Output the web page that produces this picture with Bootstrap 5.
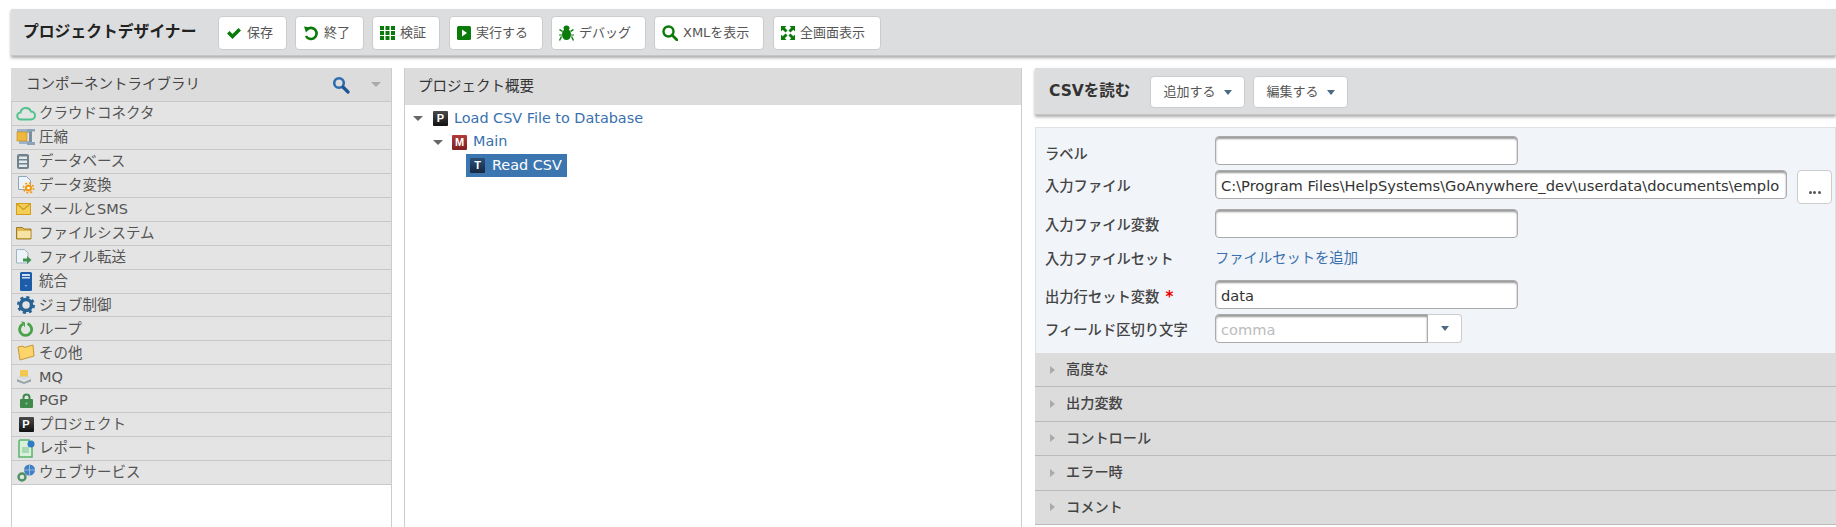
<!DOCTYPE html>
<html lang="ja">
<head>
<meta charset="utf-8">
<title>プロジェクトデザイナー</title>
<link href="https://cdn.jsdelivr.net/npm/bootstrap@5.3.0/dist/css/bootstrap.min.css" rel="stylesheet">
<style>
html,body{height:527px;overflow:hidden;background:#fff}
body{font-family:"DejaVu Sans","Noto Sans CJK JP",sans-serif;font-size:13px;color:#444}
.app-wrap{padding:9px 0 0 11px;height:527px;display:flex;flex-direction:column}
.topbar{height:47px;background:#dcddde;box-shadow:0 2px 3px #aaa;padding:7px 0 0 12px;flex:none;border-bottom:1px solid #c6c6c6}
.topbar-title{font-size:15.8px;font-weight:700;color:#222;width:195px;padding-top:4px;white-space:nowrap;line-height:24px}
.tool-btn{height:34px;background:#fff;border:1px solid #ccc;border-radius:4px;display:inline-flex;align-items:center;color:#555;font-size:13px;padding:0 0 0 7px;gap:5px;white-space:nowrap;flex:none}
.tool-btn svg{flex:none}
.btn-a{width:69px;margin-right:8px}
.btn-b{width:68px;margin-right:9px}
.btn-r{width:94px;margin-right:8px}
.btn-c{width:95px;margin-right:8px}
.btn-d{width:110px;margin-right:9px}
.btn-e{width:108px}
.panels{display:flex;margin-top:12px;flex:1;min-height:0}
.lib-pane{width:381px;border-left:1px solid #ccc;border-right:1px solid #ccc;flex:none}
.lib-head{height:34px;background:#dcdcdc;border-bottom:1px solid #c8c8c8;padding-left:15px;font-size:14.5px;color:#444;margin-left:-1px}
.lib-row{height:23.94px;background:#e4e4e4;border-bottom:1px solid #c8c8c8;display:flex;align-items:center;font-size:14.5px;color:#555;line-height:1}
.lib-ico{width:25px;padding-left:3px;display:flex;justify-content:center;flex:none;margin-right:2px}
.tree-pane{width:618px;margin-left:12px;border-left:1px solid #ccc;border-right:1px solid #ccc;flex:none}
.tree-head{height:37px;background:#dcdcdc;padding-left:13px;font-size:14.5px;color:#333;display:flex;align-items:center}
.tree-body{padding-top:2px;color:#3a71ae}
.tree-row{height:23.5px;display:flex;align-items:center;white-space:nowrap;font-size:14.4px}
.caret-dn{width:0;height:0;border-left:5px solid transparent;border-right:5px solid transparent;border-top:5px solid #666;flex:none}
.tree-sq{width:15px;height:15px;display:inline-flex;align-items:center;justify-content:center;font-size:11px;font-weight:700;color:#fff;border-radius:1px;line-height:1;flex:none;font-family:"Liberation Sans",sans-serif}
.sq-p{background:linear-gradient(#4a4a4a,#111)}
.sq-m{background:linear-gradient(#b23a3a,#7f1f1f)}
.sq-t{background:linear-gradient(#2d4f78,#14283f)}
.tree-l1{padding-left:8px}
.tree-l1 .tree-sq{margin-left:10px;margin-right:6px}
.tree-l2{padding-left:28px}
.tree-l2 .tree-sq{margin-left:9px;margin-right:6px}
.tree-l3{padding-left:61px}
.tree-sel{background:#3c76b1;color:#fff;height:23px;display:inline-flex;align-items:center;padding:0 0 0 4px;width:101px}
.tree-sel .tree-sq{margin-right:7px}
.prop-pane{flex:1;margin-left:13px;min-width:0}
.prop-head{height:47px;background:#dcddde;border-bottom:1px solid #c6c6c6;box-shadow:0 2px 3px #aaa;padding:8px 0 0 14px}
.prop-title{font-size:15.5px;font-weight:700;color:#333;width:101px;padding-top:4px;flex:none;white-space:nowrap}
.menu-btn{height:32px;background:#fff;border:1px solid #ccc;border-radius:4px;display:inline-flex;align-items:center;justify-content:center;gap:8px;color:#555;font-size:13px;flex:none;width:95px;margin-right:8px}
.caret-blue{width:0;height:0;border-left:4.5px solid transparent;border-right:4.5px solid transparent;border-top:5px solid #4a6b85;display:inline-block}
.prop-form{margin-top:12px;background:#f1f4f9;border:1px solid #dde0e5;border-bottom:0;height:226px;padding-top:8px;padding-left:9px}
.form-line{display:flex;align-items:center}
.form-lbl{width:170px;flex:none;font-size:14.3px;font-weight:500;color:#444;white-space:nowrap;padding-top:8px}
.req{color:#e00;font-weight:700;margin-left:6px;font-size:15px}
.fld{height:29px;background:#fff;border:1px solid #aaa;border-radius:4px;box-shadow:inset 0 2px 2px #999;padding:4px 5px 0;font-size:14.65px;color:#333;white-space:nowrap;overflow:hidden;line-height:22px}
.fld-s{width:303px}
.fld-l{width:572px}
.fld-c{width:213px;color:#bbb;border-radius:4px 0 0 4px}
.dots-btn{width:35px;height:34px;background:#fff;border:1px solid #ccc;border-radius:4px;margin-left:10px;display:flex;align-items:flex-end;justify-content:center;padding-bottom:9px;gap:1.5px;flex:none}
.dots-btn i{width:3px;height:3px;border-radius:50%;background:#555;display:block}
.combo-btn{width:34px;height:29px;background:#fff;border:1px solid #ccc;border-left:0;border-radius:0 4px 4px 0;display:flex;align-items:center;justify-content:center}
.acc-row{height:34.4px;background:#dcdcdc;border-bottom:1px solid #bbb;display:flex;align-items:center;padding-left:15px;font-size:14.2px;font-weight:500;color:#444}
.caret-r{width:0;height:0;border-top:4.5px solid transparent;border-bottom:4.5px solid transparent;border-left:5px solid #aaa;margin-right:11px}
.set-link{color:#3a71ae;font-size:14.3px}
</style>
</head>
<body>
<div class="app-wrap">
  <div class="topbar d-flex align-items-start">
    <div class="topbar-title">プロジェクトデザイナー</div>
    <span class="tool-btn btn-a"><svg width="16" height="14" viewBox="0 0 16 14"><path d="M1 7.500l2.500-2.500 3 3L12.500 2 15 4.500 6.500 13z" fill="#0a7a0a"/></svg>保存</span>
    <span class="tool-btn btn-a"><svg width="16" height="16" viewBox="0 0 16 16"><path d="M4 4.500A5.600 5.600 0 1 1 3 11" fill="none" stroke="#0a7a0a" stroke-width="2.600"/><path d="M1 1.500l6.500 1-4.500 5z" fill="#0a7a0a"/></svg>終了</span>
    <span class="tool-btn btn-b"><svg width="15" height="14" viewBox="0 0 15 14" fill="#0a7a0a"><rect width="4" height="4"/><rect x="5.500" width="4" height="4"/><rect x="11" width="4" height="4"/><rect y="5" width="4" height="4"/><rect x="5.500" y="5" width="4" height="4"/><rect x="11" y="5" width="4" height="4"/><rect y="10" width="4" height="4"/><rect x="5.500" y="10" width="4" height="4"/><rect x="11" y="10" width="4" height="4"/></svg>検証</span>
    <span class="tool-btn btn-r"><svg width="14" height="14" viewBox="0 0 14 14"><rect width="14" height="14" rx="1.500" fill="#0a7a0a"/><path d="M5 3.500l5 3.500-5 3.500z" fill="#fff"/></svg>実行する</span>
    <span class="tool-btn btn-c"><svg width="15" height="16" viewBox="0 0 15 16" fill="#0a7a0a"><ellipse cx="7.500" cy="9.500" rx="4.500" ry="5.500"/><ellipse cx="7.500" cy="3" rx="3" ry="2.500"/><path d="M0 5l1-1 3 2-1 1zM15 5l-1-1-3 2 1 1zM0 9.500h3v1H0zM15 9.500h-3v1h3zM0 15l2-4 1 1-2 4zM15 15l-2-4-1 1 2 4z"/></svg>デバッグ</span>
    <span class="tool-btn btn-d"><svg width="16" height="16" viewBox="0 0 16 16"><circle cx="6.500" cy="6.500" r="5" fill="none" stroke="#0a7a0a" stroke-width="2.400"/><path d="M10 10l5 5" stroke="#0a7a0a" stroke-width="2.800" stroke-linecap="round"/></svg>XMLを表示</span>
    <span class="tool-btn btn-e"><svg width="14" height="14" viewBox="0 0 14 14" fill="#0a7a0a"><path d="M0 0h5.500L3.800 1.700 6.500 4.500 4.500 6.500 1.700 3.800 0 5.500zM14 0v5.500l-1.700-1.700-2.800 2.700-2-2 2.700-2.800L8.500 0zM14 14H8.500l1.700-1.700-2.700-2.800 2-2 2.800 2.700L14 8.500zM0 14V8.500l1.700 1.700 2.800-2.700 2 2-2.700 2.800L5.500 14z"/></svg>全画面表示</span>
  </div>

  <div class="panels">
    <div class="lib-pane">
      <div class="lib-head d-flex align-items-center justify-content-between">
        <span>コンポーネントライブラリ</span>
        <span class="d-flex align-items-center">
          <svg width="18" height="18" viewBox="0 0 18 18"><circle cx="7" cy="7" r="4.800" fill="none" stroke="#2b6cb0" stroke-width="2.600"/><path d="M11 11l5 5" stroke="#1d5596" stroke-width="3.200" stroke-linecap="round"/></svg>
          <span class="caret-dn" style="border-top-color:#aaa;margin:0 10px 0 21px"></span>
        </span>
      </div>
      <div class="lib-row"><span class="lib-ico"><svg width="20" height="15" viewBox="0 0 20 15"><path d="M5 13.500a3.500 3.500 0 0 1-.5-7A5.500 5.500 0 0 1 15 5.500a4 4 0 0 1 0 8z" fill="#e4e4e4" stroke="#4fc48a" stroke-width="2"/></svg></span>クラウドコネクタ</div>
      <div class="lib-row"><span class="lib-ico"><svg width="20" height="18" viewBox="0 0 20 18"><rect x="1" y="1" width="14" height="4" fill="#9db4cc"/><rect x="3" y="13" width="12" height="3" fill="#9db4cc"/><rect x="1" y="4" width="10" height="9" fill="#efb73e" stroke="#b98a1d" stroke-width=".6"/><path d="M13 2h3v12h-3z" fill="#7b8fa3"/><rect x="11" y="1" width="8" height="2.500" fill="#8da3b8"/><rect x="11" y="14" width="8" height="3" fill="#8da3b8"/></svg></span>圧縮</div>
      <div class="lib-row"><span class="lib-ico" style="justify-content:flex-start;padding-left:5px"><svg width="12" height="15" viewBox="0 0 12 15"><rect width="12" height="15" rx="2" fill="#70828e"/><rect x="2" y="2.500" width="8" height="2.500" fill="#e4e9ec"/><rect x="2" y="6.500" width="8" height="2.500" fill="#e4e9ec"/><rect x="2" y="10.500" width="8" height="2.500" fill="#e4e9ec"/></svg></span>データベース</div>
      <div class="lib-row"><span class="lib-ico"><svg width="18" height="18" viewBox="0 0 18 18"><path d="M1.500.5h8l4 4v9h-12z" fill="#eef3f8" stroke="#8ea6bd"/><circle cx="11.500" cy="12" r="3.500" fill="#f29a11"/><circle cx="11.500" cy="12" r="5" fill="none" stroke="#f29a11" stroke-width="1.600" stroke-dasharray="2 1.900"/><circle cx="11.500" cy="12" r="1.300" fill="#fff"/></svg></span>データ変換</div>
      <div class="lib-row"><span class="lib-ico"><svg width="16" height="13" viewBox="0 0 16 13" style="margin-right:4px"><rect x=".5" y=".5" width="14" height="11" fill="#f4cd57" stroke="#d29e1f"/><path d="M1 1l6.500 5.500L14 1" fill="none" stroke="#cf9a1c" stroke-width="1.200"/></svg></span>メールとSMS</div>
      <div class="lib-row"><span class="lib-ico"><svg width="16" height="14" viewBox="0 0 16 14" style="margin-right:4px"><path d="M.5 1.500h6l1.500 1.500h7v10H.5z" fill="#e3b94c" stroke="#9b7a2a"/><rect x="1.500" y="5" width="13" height="7" fill="#f6e2a4"/></svg></span>ファイルシステム</div>
      <div class="lib-row"><span class="lib-ico"><svg width="16" height="16" viewBox="0 0 16 16" style="margin-right:4px"><path d="M.5.5h8l3.500 3.500v10h-11.500z" fill="#eef3f8" stroke="#9fb3c6"/><path d="M7 9.500h4V7l4.500 4-4.500 4v-2.500H7z" fill="#3f9250"/></svg></span>ファイル転送</div>
      <div class="lib-row"><span class="lib-ico"><svg width="12" height="19" viewBox="0 0 12 19"><rect width="12" height="19" rx="1.500" fill="#1d5ca8"/><rect x="2" y="2" width="8" height="2" fill="#cfe0f2"/><rect x="2" y="5" width="8" height="1.500" fill="#cfe0f2"/><path d="M4.500 13h3l-1.500 2z" fill="#7fa9d6"/></svg></span>統合</div>
      <div class="lib-row"><span class="lib-ico"><svg width="18" height="18" viewBox="0 0 18 18"><circle cx="9" cy="9" r="5.500" fill="none" stroke="#2a6496" stroke-width="3.500"/><circle cx="9" cy="9" r="7.500" fill="none" stroke="#2a6496" stroke-width="3" stroke-dasharray="3 2.900"/></svg></span>ジョブ制御</div>
      <div class="lib-row"><span class="lib-ico"><svg width="16" height="16" viewBox="0 0 16 16"><path d="M9.500 2.700A6 6 0 1 1 5 3" fill="none" stroke="#47a447" stroke-width="2.800"/><path d="M3 0l4 1.500v5z" fill="#47a447"/></svg></span>ループ</div>
      <div class="lib-row"><span class="lib-ico"><svg width="18" height="17" viewBox="0 0 18 17"><path d="M1 3l5-1 1 1.500L16 1l1 11-14 4z" fill="#fcd469" stroke="#c6973a"/></svg></span>その他</div>
      <div class="lib-row"><span class="lib-ico"><svg width="16" height="14" viewBox="0 0 16 14" style="margin-right:4px"><path d="M1 9l7 3 7-3v2.500l-7 2.500-7-2.500z" fill="#9aa5ae"/><path d="M1 7l7 3 7-3-7-3z" fill="#d5dade"/><rect x="4" y="0" width="8" height="6.500" rx="1" fill="#f2c84f"/></svg></span>MQ</div>
      <div class="lib-row"><span class="lib-ico"><svg width="13" height="15" viewBox="0 0 13 15"><path d="M3.500 7V4.500a3 3 0 0 1 6 0V7" fill="none" stroke="#3f8a4a" stroke-width="2"/><rect y="6" width="13" height="9" rx="1" fill="#3f8a4a"/><circle cx="6.500" cy="10.500" r="1" fill="#8fc79a"/></svg></span>PGP</div>
      <div class="lib-row"><span class="lib-ico"><span class="tree-sq sq-p">P</span></span>プロジェクト</div>
      <div class="lib-row"><span class="lib-ico"><svg width="18" height="19" viewBox="0 0 18 19" style="margin-right:1px"><path d="M3 1h9v3h3v14H2V2z" fill="#d9f0dc" stroke="#58b46c" stroke-width="1.500"/><rect x="5" y="8" width="7" height="6" fill="#a9d8b2"/><circle cx="14" cy="5" r="3.500" fill="#2f7cc4"/></svg></span>レポート</div>
      <div class="lib-row"><span class="lib-ico"><svg width="19" height="18" viewBox="0 0 19 18"><circle cx="12.500" cy="6" r="5.500" fill="#3f7fc2"/><path d="M7 6h11M12.500.5v11" stroke="#a7c9ea" stroke-width=".8"/><circle cx="5" cy="13" r="3.500" fill="#e4e4e4" stroke="#4f9160" stroke-width="2.400"/></svg></span>ウェブサービス</div>
    </div>

    <div class="tree-pane">
      <div class="tree-head">プロジェクト概要</div>
      <div class="tree-body">
        <div class="tree-row tree-l1"><span class="caret-dn"></span><span class="tree-sq sq-p">P</span>Load CSV File to Database</div>
        <div class="tree-row tree-l2"><span class="caret-dn"></span><span class="tree-sq sq-m">M</span>Main</div>
        <div class="tree-row tree-l3"><span class="tree-sel"><span class="tree-sq sq-t">T</span>Read CSV</span></div>
      </div>
    </div>

    <div class="prop-pane">
      <div class="prop-head d-flex align-items-start">
        <div class="prop-title">CSVを読む</div>
        <span class="menu-btn">追加する<span class="caret-blue"></span></span>
        <span class="menu-btn">編集する<span class="caret-blue"></span></span>
      </div>
      <div class="prop-form">
        <div class="form-line" style="height:29px"><span class="form-lbl">ラベル</span><div class="fld fld-s"></div></div>
        <div class="form-line" style="margin-top:5px;align-items:flex-start"><span class="form-lbl" style="padding-top:6px">入力ファイル</span><div class="fld fld-l">C:\Program Files\HelpSystems\GoAnywhere_dev\userdata\documents\emplo</div><span class="dots-btn"><i></i><i></i><i></i></span></div>
        <div class="form-line" style="margin-top:5px;height:29px"><span class="form-lbl" style="padding-top:5px">入力ファイル変数</span><div class="fld fld-s"></div></div>
        <div class="form-line" style="height:42px"><span class="form-lbl" style="padding-top:2px">入力ファイルセット</span><span class="set-link">ファイルセットを追加</span></div>
        <div class="form-line" style="height:29px"><span class="form-lbl" style="padding-top:6px">出力行セット変数<span class="req">*</span></span><div class="fld fld-s">data</div></div>
        <div class="form-line" style="margin-top:5px;height:29px"><span class="form-lbl" style="padding-top:5px">フィールド区切り文字</span><div class="fld fld-c">comma</div><span class="combo-btn"><span class="caret-blue"></span></span></div>
      </div>
      <div class="acc-row"><span class="caret-r"></span>高度な</div>
      <div class="acc-row"><span class="caret-r"></span>出力変数</div>
      <div class="acc-row"><span class="caret-r"></span>コントロール</div>
      <div class="acc-row"><span class="caret-r"></span>エラー時</div>
      <div class="acc-row"><span class="caret-r"></span>コメント</div>
    </div>
  </div>
</div>
</body>
</html>
